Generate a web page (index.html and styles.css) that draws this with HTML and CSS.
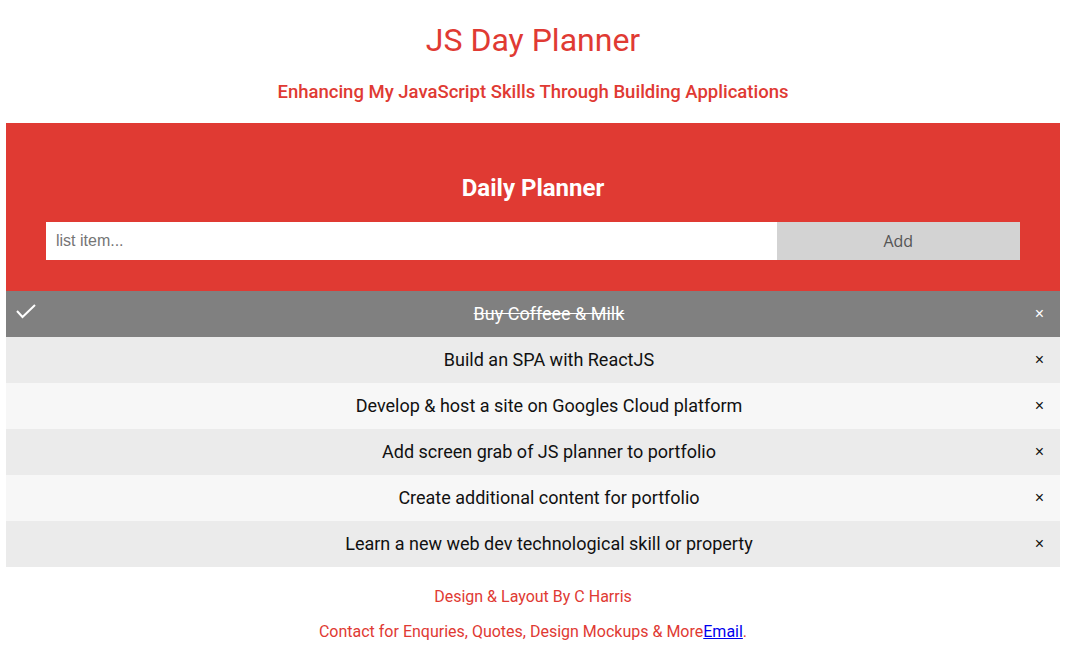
FILE: index.html
```html
<!DOCTYPE html>
<html>
<head>
<meta charset="utf-8">
<title>JS Day Planner</title>
<link rel="stylesheet" href="styles.css">
</head>
<body>
<div class="page">
  <h1 class="title">JS Day Planner</h1>
  <h3 class="subtitle">Enhancing My JavaScript Skills Through Building Applications</h3>
  <div class="header">
    <h2 class="header-title">Daily Planner</h2>
    <div class="form">
      <input class="field" type="text" placeholder="list item...">
      <span class="add-btn">Add</span>
    </div>
  </div>
  <ul class="list">
    <li class="item checked">
      <svg class="check" width="22" height="16" viewBox="0 0 22 16"><polyline points="1,7 6.5,13 19,1" fill="none" stroke="#fff" stroke-width="2"/></svg>
      <span class="item-text">Buy Coffeee &amp; Milk</span>
      <span class="close">×</span>
    </li>
    <li class="item"><span class="item-text">Build an SPA with ReactJS</span><span class="close">×</span></li>
    <li class="item"><span class="item-text">Develop &amp; host a site on Googles Cloud platform</span><span class="close">×</span></li>
    <li class="item"><span class="item-text">Add screen grab of JS planner to portfolio</span><span class="close">×</span></li>
    <li class="item"><span class="item-text">Create additional content for portfolio</span><span class="close">×</span></li>
    <li class="item"><span class="item-text">Learn a new web dev technological skill or property</span><span class="close">×</span></li>
  </ul>
  <footer class="footer">
    <p class="foot-line">Design &amp; Layout By C Harris</p>
    <p class="foot-line">Contact for Enquries, Quotes, Design Mockups &amp; More<a class="mail" href="#">Email</a>.</p>
  </footer>
</div>
</body>
</html>
```

FILE: styles.css
```css
html, body {
  margin: 0;
  padding: 0;
  background: #fff;
}
body {
  font-family: Roboto, "Liberation Sans", Arial, sans-serif;
}
.page {
  margin: 0 8px 0 6px;
  padding-top: 1px;
}
.title {
  margin: 20px 0 0;
  text-align: center;
  color: #e03a33;
  font-size: 32px;
  font-weight: 400;
  line-height: 38px;
}
.subtitle {
  margin: 22px 0 20px;
  text-align: center;
  color: #e03a33;
  font-size: 18.5px;
  font-weight: 500;
  line-height: 22px;
}
.header {
  background: #e03a33;
  padding: 30px 40px 31px;
  text-align: center;
}
.header-title {
  margin: 21px 0 20px;
  color: #fff;
  font-size: 24px;
  font-weight: 700;
  line-height: 28px;
}
.form {
  display: flex;
  height: 38px;
}
.field {
  box-sizing: border-box;
  width: 75%;
  height: 38px;
  border: none;
  margin: 0;
  padding: 0 10px;
  font-family: "Liberation Sans", Arial, sans-serif;
  font-size: 16px;
  outline: none;
  background: #fff;
}
.field::placeholder {
  color: #757575;
}
.add-btn {
  box-sizing: border-box;
  width: 25%;
  height: 38px;
  background: #d3d3d3;
  color: #555;
  font-family: "Open Sans", "Liberation Sans", sans-serif;
  font-size: 16px;
  line-height: 38px;
  text-align: center;
}
.list {
  list-style: none;
  margin: 0;
  padding: 0;
}
.item {
  position: relative;
  display: flex;
  padding: 12px 8px 12px 40px;
  font-size: 18px;
  line-height: 22px;
  color: #111;
  background: #ebebeb;
}
.item:nth-child(odd) {
  background: #f7f7f7;
}
.item.checked {
  background: #808080;
  color: #fff;
}
.item-text {
  flex: 1;
  text-align: center;
}
.checked .item-text {
  text-decoration: line-through;
}
.check {
  position: absolute;
  left: 10px;
  top: 13px;
}
.close {
  position: absolute;
  right: 0;
  top: 0;
  padding: 12px 16px;
  font-family: "Liberation Sans", Arial, sans-serif;
  font-size: 16px;
  line-height: 22px;
  color: #111;
}
.checked .close {
  color: #fff;
}
.footer {
  text-align: center;
  color: #e03a33;
  font-size: 16px;
  padding-top: 4px;
}
.foot-line {
  margin: 16px 0;
  line-height: 19px;
}
.mail {
  color: #0000ee;
  text-decoration: underline;
}
```
